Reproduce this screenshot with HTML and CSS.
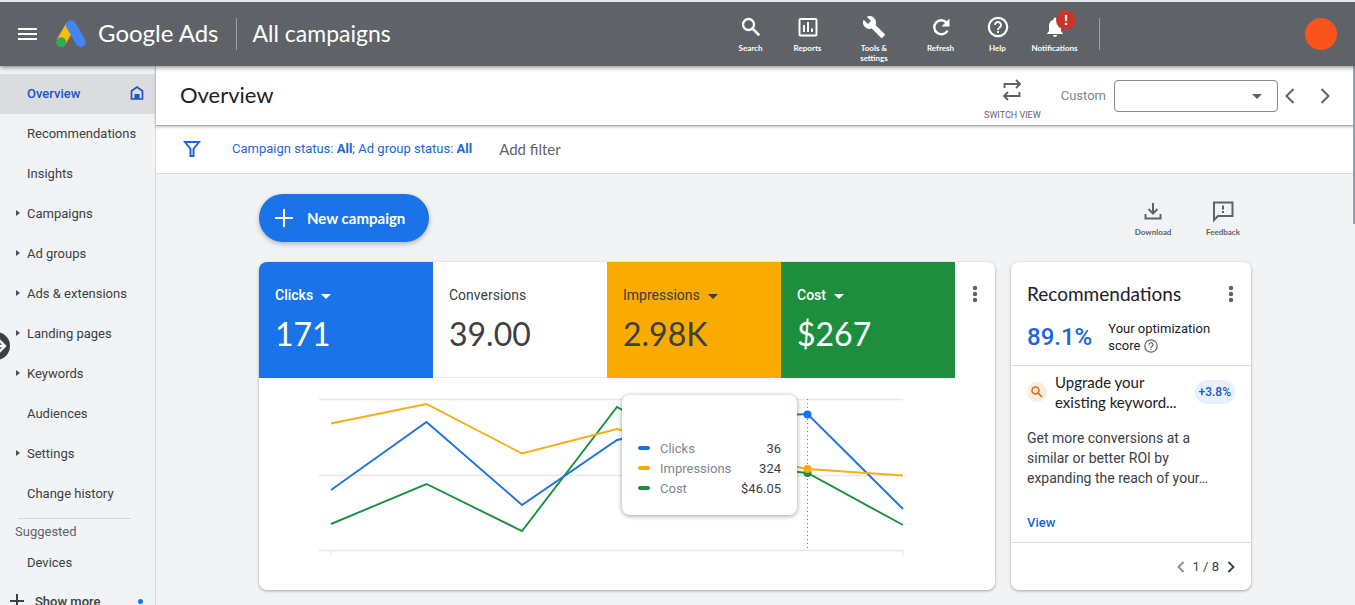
FILE: index.html
```html
<!DOCTYPE html>
<html lang="en">
<head>
	<meta charset="utf-8">
	<title>Overview - Google Ads</title>
	<link rel="stylesheet" href="styles.css">
</head>
<body>

<header class="topbar">
	<button class="menu_button" aria-label="Main menu">
		<svg width="20" height="14" viewBox="0 0 20 14"><path d="M0 2h19M0 7h19M0 12h19" stroke="#fff" stroke-width="2"/></svg>
	</button>
	<a href="#" class="brand">
		<svg class="logo" width="30" height="28" viewBox="0 0 30 28">
			<path d="M15 5L5 22" stroke="#fbbc04" stroke-width="10"/>
			<path d="M15 5.300L24.700 22" stroke="#4285f4" stroke-width="10" stroke-linecap="round"/>
			<circle cx="5.200" cy="22.300" r="5" fill="#34a853"/>
		</svg>
		<span>Google Ads</span>
	</a>
	<div class="account_name">All campaigns</div>
	<nav class="tools">
		<a href="#" class="tool">
			<svg width="24" height="24" viewBox="0 0 24 24"><circle cx="9.500" cy="9.500" r="5.500" fill="none" stroke="#fff" stroke-width="2.300"/><path d="M14 14l6.300 6.300" stroke="#fff" stroke-width="2.600"/></svg>
			<span>Search</span>
		</a>
		<a href="#" class="tool">
			<svg width="24" height="24" viewBox="0 0 24 24"><rect x="3.500" y="4" width="17" height="16.500" rx="1" fill="none" stroke="#fff" stroke-width="2"/><path d="M8 10v7M12 7v10M16 13.500v3.500" stroke="#fff" stroke-width="2"/></svg>
			<span>Reports</span>
		</a>
		<a href="#" class="tool tool_wide">
			<svg width="24" height="24" viewBox="0 0 24 24"><path fill="#fff" d="M22.700 19l-9.100-9.100c.9-2.300.4-5-1.500-6.900-2-2-5-2.400-7.400-1.300L9 6 6 9 1.600 4.700C.4 7.100.9 10.100 2.900 12.100c1.900 1.900 4.600 2.400 6.900 1.500l9.100 9.100c.4.4 1 .4 1.400 0l2.300-2.300c.5-.4.5-1.100.1-1.400z"/></svg>
			<span>Tools &amp; settings</span>
		</a>
		<a href="#" class="tool">
			<svg width="24" height="24" viewBox="0 0 24 24"><path fill="none" stroke="#fff" stroke-width="2.400" d="M18.500 15.500A7 7 0 1 1 17.500 7.600"/><path fill="#fff" d="M20.500 3.500v8h-8z"/></svg>
			<span>Refresh</span>
		</a>
		<a href="#" class="tool">
			<svg width="24" height="24" viewBox="0 0 24 24"><circle cx="12" cy="12" r="9.200" fill="none" stroke="#fff" stroke-width="2.200"/><path d="M9 10a3 3 0 1 1 4.600 2.500c-1.100.8-1.600 1.200-1.600 2.500" fill="none" stroke="#fff" stroke-width="2"/><path d="M11 16h2v2h-2z" fill="#fff"/></svg>
			<span>Help</span>
		</a>
		<a href="#" class="tool">
			<svg width="24" height="24" viewBox="0 0 24 24"><path fill="#fff" d="M12 22c1.100 0 2-.9 2-2h-4c0 1.100.9 2 2 2zm6-6v-5c0-3.100-1.600-5.600-4.500-6.300V4a1.500 1.500 0 0 0-3 0v.7C7.600 5.400 6 7.900 6 11v5l-2.200 3h16.400z"/></svg>
			<span>Notifications</span>
			<b class="alert_badge">!</b>
		</a>
	</nav>
	<div class="profile">
		<button class="avatar" aria-label="Account"></button>
	</div>
</header>

<div class="page">
	<nav class="sidebar">
		<a href="#" class="nav_item selected">Overview
			<svg width="16" height="16" viewBox="0 0 16 16"><path d="M2.500 14V6L8 2l5.500 4v8z" fill="none" stroke="#1a56c4" stroke-width="1.700"/><path d="M5.500 9h5v5h-5z" fill="#1a56c4"/></svg>
		</a>
		<a href="#" class="nav_item">Recommendations</a>
		<a href="#" class="nav_item">Insights</a>
		<a href="#" class="nav_item has_children">Campaigns</a>
		<a href="#" class="nav_item has_children">Ad groups</a>
		<a href="#" class="nav_item has_children">Ads &amp; extensions</a>
		<a href="#" class="nav_item has_children">Landing pages</a>
		<a href="#" class="nav_item has_children">Keywords</a>
		<a href="#" class="nav_item">Audiences</a>
		<a href="#" class="nav_item has_children">Settings</a>
		<a href="#" class="nav_item">Change history</a>
		<hr class="nav_line">
		<div class="nav_heading">Suggested</div>
		<a href="#" class="nav_item">Devices</a>
		<button class="show_more">
			<svg width="14" height="14" viewBox="0 0 14 14"><path d="M7 0v14M0 7h14" stroke="#3c4043" stroke-width="2"/></svg>
			<span>Show more</span>
			<i class="dot"></i>
		</button>
		<button class="expand_handle" aria-label="Expand panel">
			<svg width="28" height="28" viewBox="0 0 28 28"><path d="M17 8l6 6-6 6M12 14h9" fill="none" stroke="#fff" stroke-width="2.400"/></svg>
		</button>
	</nav>

	<main class="main">
		<div class="title_bar">
			<h1>Overview</h1>
			<button class="switch_view">
				<svg width="20" height="22" viewBox="0 0 20 22"><path d="M2.500 9V5H18M14 1l4 4-4 4M17.500 13v4H2M6 13l-4 4 4 4" fill="none" stroke="#5f6368" stroke-width="1.900"/></svg>
				<span>SWITCH VIEW</span>
			</button>
			<label for="range">Custom</label>
			<div class="range_box">
				<select id="range"><option></option></select>
			</div>
			<button class="step" aria-label="Previous period">
				<svg width="12" height="18" viewBox="0 0 12 18"><path d="M9.500 2l-7 7 7 7" fill="none" stroke="#5f6368" stroke-width="2"/></svg>
			</button>
			<button class="step" aria-label="Next period">
				<svg width="12" height="18" viewBox="0 0 12 18"><path d="M2.500 2l7 7-7 7" fill="none" stroke="#5f6368" stroke-width="2"/></svg>
			</button>
		</div>

		<div class="filter_bar">
			<svg width="18" height="18" viewBox="0 0 18 18"><path d="M2 2h14l-5.500 7v7h-3V9z" fill="none" stroke="#1a66d9" stroke-width="2"/></svg>
			<a href="#" class="filter_text">Campaign status: <b>All</b>; Ad group status: <b>All</b></a>
			<button class="add_filter">Add filter</button>
		</div>

		<div class="content">
			<div class="actions">
				<button class="new_campaign">
					<svg width="18" height="18" viewBox="0 0 18 18"><path d="M9 0v18M0 9h18" stroke="#fff" stroke-width="2"/></svg>
					<span>New campaign</span>
				</button>
				<button class="small_action">
					<svg width="24" height="24" viewBox="0 0 24 24"><path d="M12 4v10M7.500 10l4.500 4.500 4.500-4.500M4.500 15v4.500h15V15" fill="none" stroke="#5f6368" stroke-width="2"/></svg>
					<span>Download</span>
				</button>
				<button class="small_action">
					<svg width="24" height="24" viewBox="0 0 24 24"><path d="M3 21V3.500h18.500V17H7z" fill="none" stroke="#5f6368" stroke-width="2"/><path d="M12 6.500v4M12 12v2" stroke="#5f6368" stroke-width="2"/></svg>
					<span>Feedback</span>
				</button>
			</div>

			<div class="cards">
				<section class="card metrics">
					<div class="stats">
						<button class="stat blue"><span class="stat_name down">Clicks</span><span class="stat_value">171</span></button>
						<button class="stat"><span class="stat_name">Conversions</span><span class="stat_value">39.00</span></button>
						<button class="stat yellow"><span class="stat_name down">Impressions</span><span class="stat_value">2.98K</span></button>
						<button class="stat green"><span class="stat_name down">Cost</span><span class="stat_value">$267</span></button>
						<button class="more" aria-label="More options">
							<svg width="6" height="18" viewBox="0 0 6 18"><g fill="#5f6368"><circle cx="3" cy="3" r="2.200"/><circle cx="3" cy="9" r="2.200"/><circle cx="3" cy="15" r="2.200"/></g></svg>
						</button>
					</div>
					<div class="chart">
						<svg viewBox="0 0 736 212">
							<g stroke="#e8e8e8" stroke-width="1.500" fill="none">
								<path d="M60 21.500h584M60 97.500h584M60 172.500h584M72.500 172.500v5M644 172.500v5"/>
							</g>
							<path d="M548.500 21v152" stroke="#777" stroke-dasharray="1 3"/>
							<g fill="none" stroke-width="1.900">
								<polyline stroke="#1a9040" points="72,146 167.500,106 263,153 358,29 453,85 548.500,95 644,147"/>
								<polyline stroke="#1f74e0" points="72,112 167.500,44 263,127 358,62 453,41 548.500,36 644,131"/>
								<polyline stroke="#f5ae14" points="72,45.500 167.500,26 263,75.500 358,51 453,72 548.500,91 644,97.500"/>
							</g>
							<circle cx="548.500" cy="95" r="4" fill="#1e8e3e"/>
							<circle cx="548.500" cy="36.500" r="4" fill="#1a73e8"/>
							<circle cx="548.500" cy="91" r="4" fill="#f9ab00"/>
						</svg>
						<div class="tooltip">
							<table>
								<tr><td class="key"><i class="key_blue"></i></td><th scope="row">Clicks</th><td>36</td></tr>
								<tr><td class="key"><i class="key_yellow"></i></td><th scope="row">Impressions</th><td>324</td></tr>
								<tr><td class="key"><i class="key_green"></i></td><th scope="row">Cost</th><td>$46.05</td></tr>
							</table>
						</div>
					</div>
				</section>

				<section class="card recs">
					<div class="recs_head">
						<h2>Recommendations</h2>
						<button class="more" aria-label="More options">
							<svg width="6" height="18" viewBox="0 0 6 18"><g fill="#5f6368"><circle cx="3" cy="3" r="2.200"/><circle cx="3" cy="9" r="2.200"/><circle cx="3" cy="15" r="2.200"/></g></svg>
						</button>
					</div>
					<div class="score">
						<strong>89.1%</strong>
						<span>Your optimization score
							<svg width="14" height="14" viewBox="0 0 14 14"><circle cx="7" cy="7" r="6.200" fill="none" stroke="#5f6368" stroke-width="1.200"/><path d="M5 5.800a2 2 0 1 1 3 1.600c-.7.500-1 .7-1 1.500" fill="none" stroke="#5f6368" stroke-width="1.200"/><path d="M6.400 9.800h1.200V11H6.400z" fill="#5f6368"/></svg>
						</span>
					</div>
					<div class="rec">
						<div class="rec_title">
							<svg width="20" height="20" viewBox="0 0 20 20"><circle cx="10" cy="10" r="10" fill="#fdebdc"/><circle cx="8.500" cy="8.500" r="3.500" fill="none" stroke="#c8711b" stroke-width="1.500"/><path d="M11 11l4 4" stroke="#c8711b" stroke-width="1.700"/></svg>
							<h3>Upgrade your existing keyword...</h3>
							<span class="uplift">+3.8%</span>
						</div>
						<p>Get more conversions at a similar or better ROI by expanding the reach of your…</p>
						<a href="#" class="view_link">View</a>
					</div>
					<div class="pager">
						<button aria-label="Previous"><svg width="8" height="12" viewBox="0 0 8 12"><path d="M6.500 1l-5 5 5 5" fill="none" stroke="#8a8d91" stroke-width="1.800"/></svg></button>
						<span>1 / 8</span>
						<button aria-label="Next"><svg width="8" height="12" viewBox="0 0 8 12"><path d="M1.500 1l5 5-5 5" fill="none" stroke="#3c4043" stroke-width="1.800"/></svg></button>
					</div>
				</section>
			</div>
		</div>
		<div class="scroll_thumb"></div>
	</main>
</div>

</body>
</html>
```
FILE: styles.css
```css
* {
	box-sizing: border-box;
}
body {
	margin: 0;
	height: 100vh;
	overflow: hidden;
	display: flex;
	flex-direction: column;
	font-family: Roboto, "Liberation Sans", sans-serif;
	font-size: 13px;
	color: #3c4043;
	background-color: #f1f3f4;
}
a {
	color: inherit;
	text-decoration: none;
}
button {
	border: 0;
	padding: 0;
	background: none;
	font: inherit;
	color: inherit;
	cursor: pointer;
}
svg {
	display: block;
	flex: none;
}

/* top bar */
.topbar {
	display: flex;
	align-items: center;
	flex: none;
	height: 66px;
	border-top: 2px solid #e4e6e8;
	background-color: #5f6368;
	color: #fff;
	font-family: Lato, sans-serif;
	box-shadow: 0 1px 5px rgba(0,0,0,0.5);
	position: relative;
	z-index: 2;
}
.menu_button {
	padding: 0 18px;
}
.brand {
	display: flex;
	align-items: center;
	gap: 12px;
	font-size: 24px;
	line-height: 32px;
}
.brand span, .account_name {
	padding-bottom: 2px;
}
.account_name {
	flex: 1;
	margin-left: 17px;
	padding-left: 16px;
	border-left: 1px solid #9aa0a6;
	font-size: 23px;
	line-height: 30px;
	white-space: nowrap;
}
.tools {
	display: flex;
	align-self: stretch;
	padding: 13px 16px 0 0;
}
.tool {
	display: flex;
	flex-direction: column;
	align-items: center;
	gap: 4px;
	width: 57px;
	font-size: 8px;
	font-weight: bold;
	line-height: 10px;
	text-align: center;
	position: relative;
}
.tool_wide {
	width: 76px;
	padding: 0 20px;
}
.alert_badge {
	position: absolute;
	left: 30px;
	top: -5px;
	width: 20px;
	height: 20px;
	border-radius: 10px;
	background-color: #c5372c;
	font-size: 14px;
	line-height: 20px;
}
.profile {
	width: 256px;
	height: 32px;
	padding-right: 18px;
	border-left: 1px solid #9aa0a6;
	text-align: right;
}
.avatar {
	width: 32px;
	height: 32px;
	border-radius: 16px;
	background-color: #fa541c;
}

.page {
	display: flex;
	flex: 1;
	min-height: 0;
}

/* left navigation */
.sidebar {
	flex: none;
	width: 156px;
	padding-top: 8px;
	border-right: 1px solid #d5d7da;
	position: relative;
}
.nav_item {
	display: flex;
	align-items: center;
	justify-content: space-between;
	height: 40px;
	padding: 0 10px 2px 27px;
	white-space: nowrap;
}
.selected {
	background-color: #dadce0;
	color: #1a56c4;
	font-weight: 500;
}
.has_children {
	justify-content: flex-start;
	padding-left: 16px;
}
.has_children::before {
	content: "";
	border: 3px solid transparent;
	border-left: 4px solid #4a4d51;
	border-right: 0;
	margin-right: 7px;
}
.nav_line {
	margin: 4px 24px 0 18px;
	border: 0;
	border-top: 1px solid #d5d7da;
}
.nav_heading {
	padding: 2px 0 0 15px;
	line-height: 22px;
	color: #5f6368;
}
.show_more {
	display: flex;
	align-items: center;
	gap: 11px;
	width: 100%;
	height: 36px;
	padding: 0 12px 0 10px;
	font-weight: 500;
}
.dot {
	width: 5px;
	height: 5px;
	margin-left: auto;
	border-radius: 3px;
	background-color: #1a73e8;
}
.expand_handle {
	position: absolute;
	left: -18px;
	top: 266px;
	border-radius: 14px;
	background-color: #3c4043;
}

/* title and filters */
.main {
	flex: 1;
	min-width: 0;
	padding-right: 1px;
	position: relative;
}
.title_bar {
	display: flex;
	align-items: center;
	height: 60px;
	padding: 0 17px 0 24px;
	border-bottom: 1px solid #a9abad;
	box-shadow: 0 1px 3px rgba(0,0,0,0.25);
	background-color: #fff;
	position: relative;
}
h1 {
	flex: 1;
	margin: 0;
	padding-bottom: 2px;
	font-family: Lato, sans-serif;
	font-size: 22px;
	font-weight: 400;
	color: #202124;
}
.switch_view {
	display: flex;
	flex-direction: column;
	align-items: center;
	gap: 9px;
	margin-top: 8px;
	font-size: 9px;
	color: #5f6368;
}
.title_bar label {
	margin: 0 8px 0 20px;
	font-size: 13px;
	color: #80868b;
}
.range_box {
	position: relative;
}
.range_box::after {
	content: "";
	position: absolute;
	right: 16px;
	top: 14px;
	border: 5px solid transparent;
	border-top-color: #5f6368;
	border-bottom: 0;
	pointer-events: none;
}
.range_box select {
	display: block;
	appearance: none;
	width: 164px;
	height: 32px;
	border: 1px solid #80868b;
	border-radius: 4px;
	background-color: #fff;
}
.step {
	padding: 0 6px;
}
.step + .step {
	margin-left: 11px;
}
.filter_bar {
	display: flex;
	align-items: center;
	height: 48px;
	padding: 0 27px 2px;
	border-bottom: 1px solid #dadce0;
	background-color: #fff;
}
.filter_text {
	margin: 0 27px 0 31px;
	color: #1a66d9;
}
.add_filter {
	font-family: Lato, sans-serif;
	font-size: 15px;
	color: #5f6368;
}

/* cards */
.content {
	max-width: 992px;
	margin: 0 auto;
	padding-top: 20px;
}
.actions {
	display: flex;
	align-items: center;
	margin-bottom: 20px;
}
.new_campaign {
	display: flex;
	align-items: center;
	gap: 14px;
	height: 48px;
	margin-right: auto;
	padding: 0 24px 0 16px;
	border-radius: 24px;
	background-color: #1a73e8;
	color: #fff;
	font-family: Lato, sans-serif;
	font-size: 15px;
	font-weight: bold;
	box-shadow: 0 2px 5px rgba(60,64,67,0.35);
}
.small_action {
	display: flex;
	flex-direction: column;
	align-items: center;
	gap: 4px;
	width: 56px;
	margin-left: 14px;
	font-family: Lato, sans-serif;
	font-size: 8px;
	font-weight: bold;
	color: #5f6368;
}
.cards {
	display: flex;
	gap: 16px;
}
.card {
	overflow: hidden;
	border-radius: 8px;
	background-color: #fff;
	box-shadow: 0 1px 3px rgba(60,64,67,0.45);
}
.metrics {
	flex: 1;
}
.stats {
	display: flex;
}
.stat {
	display: flex;
	flex-direction: column;
	width: 174px;
	height: 116px;
	padding: 25px 16px 0;
	border-bottom: 1px solid #e8eaed;
	text-align: left;
}
.blue {
	background-color: #1a73e8;
	border-color: #1a73e8;
	color: #fff;
}
.yellow {
	background-color: #f9ab00;
	border-color: #f9ab00;
}
.green {
	background-color: #1e8e3e;
	border-color: #1e8e3e;
	color: #fff;
}
.stat_name {
	display: flex;
	align-items: center;
	font-size: 14px;
	line-height: 16px;
}
.blue .stat_name, .green .stat_name {
	font-weight: 500;
}
.down::after {
	content: "";
	margin: 2px 0 0 8px;
	border: 5px solid transparent;
	border-top-color: currentColor;
	border-bottom: 0;
}
.stat_value {
	margin-top: 10px;
	font-family: Lato, sans-serif;
	font-size: 32px;
	line-height: 42px;
}
.more {
	padding: 0 5px;
}
.stats .more {
	align-self: flex-start;
	margin: 23px auto 0;
}
.chart {
	position: relative;
}
.chart > svg {
	width: 100%;
}
.tooltip {
	position: absolute;
	left: 363px;
	top: 17px;
	width: 175px;
	padding: 43px 16px 17px;
	border-radius: 8px;
	background-color: #fff;
	box-shadow: 0 1px 5px rgba(60,64,67,0.5);
}
.tooltip table {
	width: 100%;
	border-collapse: collapse;
}
.tooltip td, .tooltip th {
	height: 20px;
	padding: 0;
	text-align: right;
}
.tooltip th {
	font-weight: 400;
	text-align: left;
	color: #80868b;
}
.tooltip .key {
	width: 22px;
}
.key i {
	display: block;
	width: 12px;
	height: 4px;
	border-radius: 2px;
}
.key_blue {
	background-color: #1a73e8;
}
.key_yellow {
	background-color: #f9ab00;
}
.key_green {
	background-color: #1e8e3e;
}

/* recommendations */
.recs {
	display: flex;
	flex-direction: column;
	flex: none;
	width: 240px;
}
.recs_head {
	display: flex;
	align-items: center;
	justify-content: space-between;
	padding: 20px 12px 0 16px;
}
h2 {
	margin: 0;
	font-family: Lato, sans-serif;
	font-size: 19px;
	font-weight: 400;
	line-height: 24px;
	color: #202124;
}
.score {
	display: flex;
	align-items: center;
	gap: 16px;
	padding: 14px 16px 11px;
	border-bottom: 1px solid #dadce0;
	line-height: 17px;
	color: #202124;
}
.score strong {
	font-size: 24px;
	font-weight: 500;
	line-height: 30px;
	color: #1a66d9;
}
.score svg {
	display: inline-block;
	vertical-align: -3px;
}
.rec {
	flex: 1;
	padding: 6px 16px 0;
}
.rec_title {
	display: flex;
	align-items: center;
	gap: 8px;
}
h3 {
	flex: 1;
	margin: 0;
	font-family: Lato, sans-serif;
	font-size: 15px;
	font-weight: 400;
	line-height: 20px;
	color: #202124;
}
.uplift {
	padding: 0 4px;
	border-radius: 12px;
	background-color: #e8f0fe;
	color: #1a56c4;
	font-size: 12px;
	font-weight: 500;
	line-height: 24px;
}
.rec p {
	margin: 16px 0 25px;
	font-size: 14px;
	line-height: 20px;
}
.view_link {
	font-weight: 500;
	line-height: 20px;
	color: #1a66d9;
}
.pager {
	display: flex;
	align-items: center;
	justify-content: flex-end;
	gap: 8px;
	height: 48px;
	padding-right: 16px;
	border-top: 1px solid #dadce0;
}
.scroll_thumb {
	position: absolute;
	right: 0;
	top: 0;
	width: 2px;
	height: 158px;
	background-color: #9aa0a6;
}
```
